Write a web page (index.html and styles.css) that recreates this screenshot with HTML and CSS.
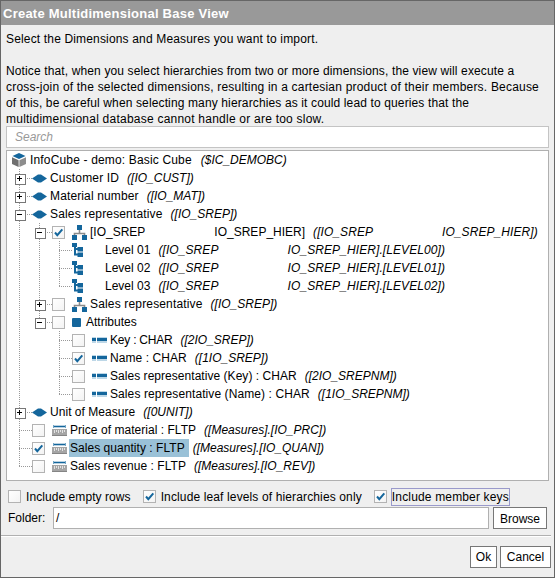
FILE: index.html
```
<!DOCTYPE html>
<html lang="en">
<head>
<meta charset="utf-8">
<title>Create Multidimensional Base View</title>
<link rel="stylesheet" href="styles.css">
</head>
<body>
<svg class="defs" aria-hidden="true">
  <symbol id="cube" viewBox="0 0 14 14"><path d="M0 4.300 6.600 7.200V14L0 11z" fill="#6f6f6f"/><path d="M14 4.300 7.400 7.200V14l6.600-3z" fill="#8d8d8d"/><path d="M7 0l6.500 2.900L7 5.900.5 2.900z" fill="#14669c"/></symbol>
  <symbol id="dim" viewBox="0 0 15 9"><path d="M0 4.500 6 .5h3l6 4-6 4H6z" fill="#14669c"/></symbol>
  <symbol id="hier" viewBox="0 0 15 15"><path d="M7.500 4v4M2.500 11V8.500h10V11" fill="none" stroke="#8b8b8b" stroke-width="1.600"/><path d="M5 0h5v5H5zM0 10h5v5H0zM10 10h5v5h-5z" fill="#14669c"/></symbol>
  <symbol id="level" viewBox="0 0 11 14"><path d="M3 3v8.500H7M3 6H7" fill="none" stroke="#14669c" stroke-width="2"/><path d="M0 0h5v4H0zM5.500 4H11v4.500H5.500zM5.500 9.500H11V14H5.500z" fill="#14669c"/></symbol>
  <symbol id="attr" viewBox="0 0 15 6"><path d="M0 0h15v6H0z" fill="#bdd7e7"/><path d="M0 1h4v3H0zM5 1h10v3H5z" fill="#14669c"/><path d="M4 0h1v6H4z" fill="#fff"/></symbol>
  <symbol id="measure" viewBox="0 0 15 11"><path d="M1.500 0v3M13.500 0v3" stroke="#6fa3c4" fill="none"/><path d="M2 .7h11v1.600H2z" fill="#14669c"/><path d="M0 4h15v7H0z" fill="#a5a5a5"/><path d="M0 10h15v1H0z" fill="#858585"/><path d="M2.500 5v3M4.500 5v2M6.500 5v3M8.500 5v2M10.500 5v3M12.500 5v2" stroke="#e3e3e3"/></symbol>
  <symbol id="check" viewBox="0 0 11 11"><path d="M2 5.500 4.300 8.200 9.300 2.300" fill="none" stroke="#14669c" stroke-width="2"/></symbol>
</svg>
<main class="dialog">
  <h1 class="title">Create Multidimensional Base View</h1>
  <div class="intro">
    <p class="k16">Select the Dimensions and Measures you want to import.</p>
    <p class="blank"></p>
    <p class="k13">Notice that, when you select hierarchies from two or more dimensions, the view will execute a</p>
    <p class="k20">cross-join of the selected dimensions, resulting in a cartesian product of their members. Because</p>
    <p class="k13">of this, be careful when selecting many hierarchies as it could lead to queries that the</p>
    <p class="k23">multidimensional database cannot handle or are too slow.</p>
  </div>
  <div class="search">Search</div>
  <div class="tree">
    <div class="row root"><svg class="cube"><use href="#cube"/></svg><span class="k16">InfoCube - demo: Basic Cube</span><i class="wide">($IC_DEMOBC)</i></div>
    <div class="row"><b class="g t plus"></b><svg class="dim"><use href="#dim"/></svg><span class="k16">Customer ID</span><i>([IO_CUST])</i></div>
    <div class="row"><b class="g t plus"></b><svg class="dim"><use href="#dim"/></svg><span class="k13">Material number</span><i>([IO_MAT])</i></div>
    <div class="row"><b class="g t minus"></b><svg class="dim"><use href="#dim"/></svg><span class="k16">Sales representative</span><i>([IO_SREP])</i></div>
    <div class="row"><b class="g v"></b><b class="g t minus"></b><em class="box"><svg><use href="#check"/></svg></em><svg class="hier"><use href="#hier"/></svg><span>[IO_SREP<s></s>IO_SREP_HIER]</span><i class="k07">([IO_SREP<s></s>IO_SREP_HIER])</i></div>
    <div class="row"><b class="g v"></b><b class="g v"></b><b class="g t"></b><svg class="level"><use href="#level"/></svg><span>Level 01</span><i class="k10">([IO_SREP<s></s>IO_SREP_HIER].[LEVEL00])</i></div>
    <div class="row"><b class="g v"></b><b class="g v"></b><b class="g t"></b><svg class="level"><use href="#level"/></svg><span>Level 02</span><i class="k10">([IO_SREP<s></s>IO_SREP_HIER].[LEVEL01])</i></div>
    <div class="row"><b class="g v"></b><b class="g v"></b><b class="g t last"></b><svg class="level"><use href="#level"/></svg><span>Level 03</span><i class="k10">([IO_SREP<s></s>IO_SREP_HIER].[LEVEL02])</i></div>
    <div class="row"><b class="g v"></b><b class="g t plus"></b><em class="box"></em><svg class="hier"><use href="#hier"/></svg><span class="k16">Sales representative</span><i>([IO_SREP])</i></div>
    <div class="row"><b class="g v"></b><b class="g t last minus"></b><em class="box"></em><em class="square"></em><span>Attributes</span></div>
    <div class="row"><b class="g v"></b><b class="g"></b><b class="g t"></b><em class="box"></em><svg class="attr"><use href="#attr"/></svg><span class="tight">Key : CHAR</span><i>([2IO_SREP])</i></div>
    <div class="row"><b class="g v"></b><b class="g"></b><b class="g t"></b><em class="box"><svg><use href="#check"/></svg></em><svg class="attr"><use href="#attr"/></svg><span class="k07">Name : CHAR</span><i>([1IO_SREP])</i></div>
    <div class="row"><b class="g v"></b><b class="g"></b><b class="g t"></b><em class="box"></em><svg class="attr"><use href="#attr"/></svg><span class="k03">Sales representative (Key) : CHAR</span><i>([2IO_SREPNM])</i></div>
    <div class="row"><b class="g v"></b><b class="g"></b><b class="g t last"></b><em class="box"></em><svg class="attr"><use href="#attr"/></svg><span class="k10">Sales representative (Name) : CHAR</span><i>([1IO_SREPNM])</i></div>
    <div class="row"><b class="g t plus"></b><svg class="dim"><use href="#dim"/></svg><span class="k03">Unit of Measure</span><i>([0UNIT])</i></div>
    <div class="row"><b class="g t"></b><em class="box"></em><svg class="measure"><use href="#measure"/></svg><span class="k03">Price of material : FLTP</span><i>([Measures].[IO_PRC])</i></div>
    <div class="row"><b class="g t"></b><em class="box"><svg><use href="#check"/></svg></em><svg class="measure"><use href="#measure"/></svg><span class="selected k03">Sales quantity : FLTP</span><i>([Measures].[IO_QUAN])</i></div>
    <div class="row"><b class="g t last"></b><em class="box"></em><svg class="measure"><use href="#measure"/></svg><span class="k03">Sales revenue : FLTP</span><i>([Measures].[IO_REV])</i></div>
  </div>
  <div class="options">
    <label><em class="box"></em><span class="k07">Include empty rows</span></label>
    <label><em class="box"><svg><use href="#check"/></svg></em><span class="k13">Include leaf levels of hierarchies only</span></label>
    <label><em class="box"><svg><use href="#check"/></svg></em><span class="focused k16">Include member keys</span></label>
  </div>
  <div class="folder"><span>Folder:</span><div class="path">/</div><button class="browse">Browse</button></div>
  <div class="actions"><button class="ok">Ok</button><button class="cancel">Cancel</button></div>
</main>
</body>
</html>
```
FILE: styles.css
```
* { box-sizing: border-box; }
body { margin: 0; font: 12px/16px "Liberation Sans", Arial, sans-serif; color: #000; }
.defs { position: absolute; width: 0; height: 0; }
svg { display: block; flex: none; }
.dialog { width: 555px; height: 578px; border: 1px solid #666; background: #efefef; display: flex; flex-direction: column; }
.title { margin: 0; height: 24px; padding-left: 2px; background: #999; color: #fff; font-size: 13px; line-height: 25px; letter-spacing: .24px; }
.intro { padding: 6px 0 0 5px; height: 101px; white-space: nowrap; }
.intro p { margin: 0; height: 16px; }
.search { width: 543px; margin-left: 5px; height: 22px; border: 1px solid #c4c4c4; background: #fff; padding-left: 8px; line-height: 21px; font-style: italic; color: #999; }
.tree { width: 543px; height: 331px; margin: 2px 0 0 5px; padding-left: 3px; border: 1px solid #b0b0b0; background: #fff; }

/* tracking steps */
.tight { letter-spacing: -.22px; }
.k03 { letter-spacing: .04px; }
.k07 { letter-spacing: .07px; }
.k10 { letter-spacing: .09px; }
.k13 { letter-spacing: .13px; }
.k16 { letter-spacing: .16px; }
.k20 { letter-spacing: .2px; }
.k23 { letter-spacing: .23px; }

.row { display: flex; align-items: center; height: 18px; white-space: nowrap; }
.row i { margin-left: 8px; }
.row .wide { margin-left: 9px; }
.row span { height: 16px; }
.row s { display: inline-block; width: 69px; }
.root { padding-left: 2px; }
.cube { width: 14px; height: 14px; margin-right: 4px; }
.g { position: relative; width: 20px; height: 18px; flex: none; }
.v::before, .t::before { content: ""; position: absolute; left: 9px; top: 0; width: 1px; height: 18px; background: repeating-linear-gradient(#999 0 1px, transparent 1px 2px); }
.g.last::before { height: 9px; }
.t { width: 22px; background: repeating-linear-gradient(90deg, #999 0 1px, transparent 1px 2px) 9px 9px / 13px 1px no-repeat; }
.plus::after, .minus::after { content: ""; position: absolute; left: 5px; top: 5px; width: 9px; height: 9px; border: 1px solid #777; background: linear-gradient(#000, #000) 1px 3px / 5px 1px no-repeat, #fff; }
.plus::after { background: linear-gradient(#000, #000) 1px 3px / 5px 1px no-repeat, linear-gradient(#000, #000) 3px 1px / 1px 5px no-repeat, #fff; }
.dim { width: 15px; height: 9px; margin-right: 3px; }
.box { width: 13px; height: 13px; flex: none; border: 1px solid #b3b3b3; background: linear-gradient(135deg, #fff, #f3f3f3); }
.box svg { width: 11px; height: 11px; }
.row .box { margin-right: 7px; }
.hier { width: 15px; height: 15px; margin-right: 3px; }
.level { width: 11px; height: 14px; margin-right: 22px; }
.square { width: 9px; height: 9px; border-radius: 1px; background: #14669c; margin-right: 5px; }
.attr { width: 15px; height: 6px; margin-right: 3px; }
.measure { width: 15px; height: 11px; margin-right: 3px; }
.row .selected { background: #9ac1d7; height: 18px; line-height: 18px; margin: 0 -4px 0 -1px; padding: 0 4px 0 1px; }
.options { display: flex; align-items: center; gap: 12px; height: 26px; padding: 5px 0 0 7px; }
.options label { display: flex; align-items: center; height: 18px; }
.options span { margin-left: 5px; white-space: nowrap; }
.options .focused { margin-left: 4px; border: 1px solid #9a9acb; height: 18px; }
.folder { display: flex; height: 22px; padding-left: 7px; line-height: 22px; }
.folder > span { width: 45px; }
.path { width: 436px; border: 1px solid #b0b0b0; background: #fff; line-height: 20px; padding-left: 2px; }
button { font: inherit; height: 22px; padding: 0; border: 1px solid #777; background: #fff; color: #000; }
.browse { width: 54px; margin-left: 4px; }
.actions { display: flex; justify-content: flex-end; gap: 3px; width: 550px; margin-top: 6px; padding-top: 10px; border-top: 1px solid #b0b0b0; box-shadow: inset 0 1px #fff; }
.ok { width: 27px; }
.cancel { width: 51px; }
```
